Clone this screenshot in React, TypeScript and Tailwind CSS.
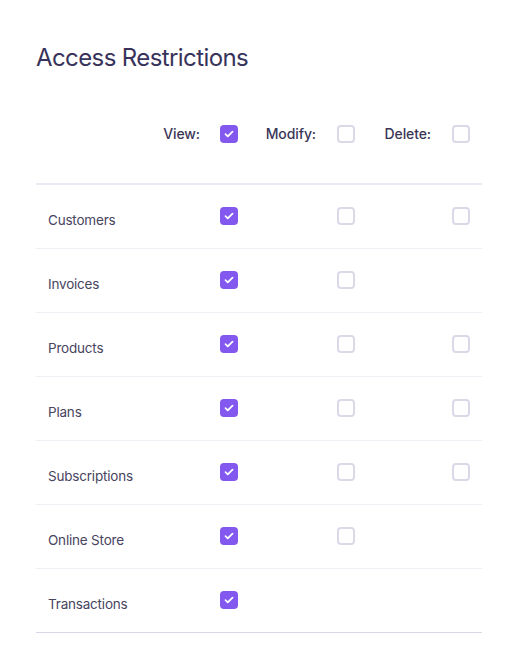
import React from "react";

const Checked = () => (
  <div className="w-[18px] h-[18px] rounded-[4px] bg-[#8258ef] flex items-center justify-center shrink-0">
    <svg width="10" height="8" viewBox="0 0 10 8" fill="none">
      <path d="M1.5 4.2 L3.8 6.3 L8.5 1.6" stroke="white" strokeWidth="1.8" strokeLinecap="round" strokeLinejoin="round" />
    </svg>
  </div>
);

const Unchecked = () => (
  <div className="w-[18px] h-[18px] rounded-[4px] border-2 border-[#dbd9e8] bg-white shrink-0" />
);

const Box = ({ v }: { v: boolean | null }) =>
  v === null ? <div className="w-[18px] h-[18px]" /> : v ? <Checked /> : <Unchecked />;

const rows: { name: string; view: boolean; modify: boolean | null; del: boolean | null }[] = [
  { name: "Customers", view: true, modify: false, del: false },
  { name: "Invoices", view: true, modify: false, del: null },
  { name: "Products", view: true, modify: false, del: false },
  { name: "Plans", view: true, modify: false, del: false },
  { name: "Subscriptions", view: true, modify: false, del: false },
  { name: "Online Store", view: true, modify: false, del: null },
  { name: "Transactions", view: true, modify: null, del: null },
];

export default function App() {
  return (
    <div className="w-[518px] min-h-[662px] bg-white px-9 pt-[42px]" style={{ fontFamily: "Inter, 'Noto Sans', sans-serif" }}>
      <h1 className="text-[24px] leading-8 text-[#37335a] font-normal tracking-[-0.6px]">Access Restrictions</h1>
      <div className="mt-[10px] h-[101px] grid grid-cols-[184px_117px_115px_1fr] items-center border-b-2 border-[#ebe9f4] text-[14px] font-medium text-[#3a3658] tracking-[-0.1px]">
        <div className="flex justify-end pr-5">View:</div>
        <div className="flex items-center justify-between pr-[21px]">
          <Checked />
          <span>Modify:</span>
        </div>
        <div className="flex items-center justify-between pr-[21px]">
          <Unchecked />
          <span>Delete:</span>
        </div>
        <div className="flex items-center">
          <Unchecked />
        </div>
      </div>
      {rows.map((r, i) => (
        <div
          key={r.name}
          className={`h-[64px] grid grid-cols-[184px_117px_115px_1fr] items-center border-b ${
            i === rows.length - 1 ? "border-[#d9d6e7]" : "border-[#efeef5]"
          }`}
        >
          <div className="pl-3 pt-[8px] text-[13.5px] tracking-[-0.2px] text-[#48445f]">{r.name}</div>
          <div className="flex mb-[2px]"><Box v={r.view} /></div>
          <div className="flex mb-[2px]"><Box v={r.modify} /></div>
          <div className="flex mb-[2px]"><Box v={r.del} /></div>
        </div>
      ))}
    </div>
  );
}
